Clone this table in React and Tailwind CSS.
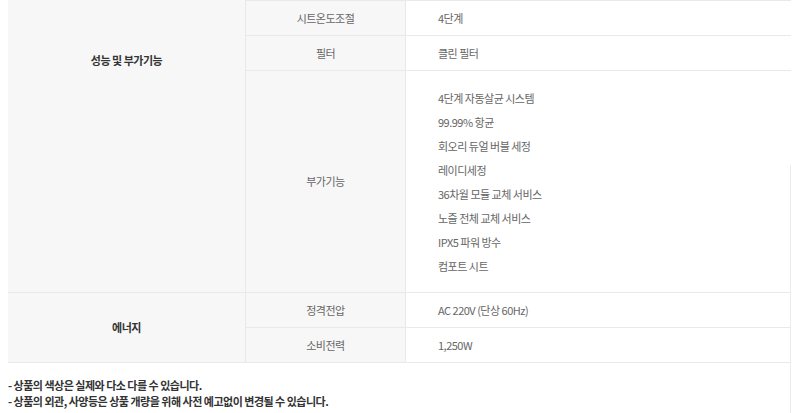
import React from 'react';

const font = { fontFamily: '"Noto Sans CJK KR", "Noto Sans", sans-serif' };

const Row = ({ label, children, tall }) => (
  <div className="flex border-t border-[#e9e9e9]">
    <div className="w-[160px] shrink-0 bg-[#f7f7f7] border-r border-[#e9e9e9] flex items-center justify-center text-[#666]">
      {label}
    </div>
    <div className={`flex-1 pl-[32px] text-[#666] ${tall ? 'pt-[15px] pb-[14px]' : 'h-[34px] flex items-center'}`}>
      {children}
    </div>
  </div>
);

const features = [
  '4단계 자동살균 시스템',
  '99.99% 항균',
  '회오리 듀얼 버블 세정',
  '레이디세정',
  '36차월 모듈 교체 서비스',
  '노즐 전체 교체 서비스',
  'IPX5 파워 방수',
  '컴포트 시트',
];

export default function App() {
  return (
    <div className="relative w-[800px] h-[413px] bg-white overflow-hidden text-[11px] tracking-[-0.5px]" style={font}>
      <div className="ml-2 w-[783px]">
        {/* 성능 및 부가기능 */}
        <div className="flex">
          <div className="w-[238px] shrink-0 bg-[#f7f7f7] border-r border-[#e9e9e9] pt-[50px] text-center leading-5 font-semibold text-[#333]">
            성능 및 부가기능
          </div>
          <div className="flex-1 flex flex-col">
            <Row label="시트온도조절">4단계</Row>
            <Row label="필터">클린 필터</Row>
            <Row label="부가기능" tall>
              {features.map((f) => (
                <div key={f} className="leading-6">{f}</div>
              ))}
            </Row>
          </div>
        </div>

        {/* 에너지 */}
        <div className="flex border-t border-b border-[#e9e9e9]">
          <div className="w-[238px] shrink-0 bg-[#f7f7f7] border-r border-[#e9e9e9] flex items-center justify-center font-semibold text-[#333]">
            에너지
          </div>
          <div className="flex-1 flex flex-col [&>div:first-child]:border-t-0">
            <Row label="정격전압">AC 220V (단상 60Hz)</Row>
            <Row label="소비전력">1,250W</Row>
          </div>
        </div>
      </div>

      <div className="ml-2 mt-[14px] leading-4 font-semibold text-[#333]">
        <p>- 상품의 색상은 실제와 다소 다를 수 있습니다.</p>
        <p>- 상품의 외관, 사양등은 상품 개량을 위해 사전 예고없이 변경될 수 있습니다.</p>
      </div>

      <div className="absolute left-[790px] top-[165px] bottom-0 w-px bg-[#ececec]" />
    </div>
  );
}
